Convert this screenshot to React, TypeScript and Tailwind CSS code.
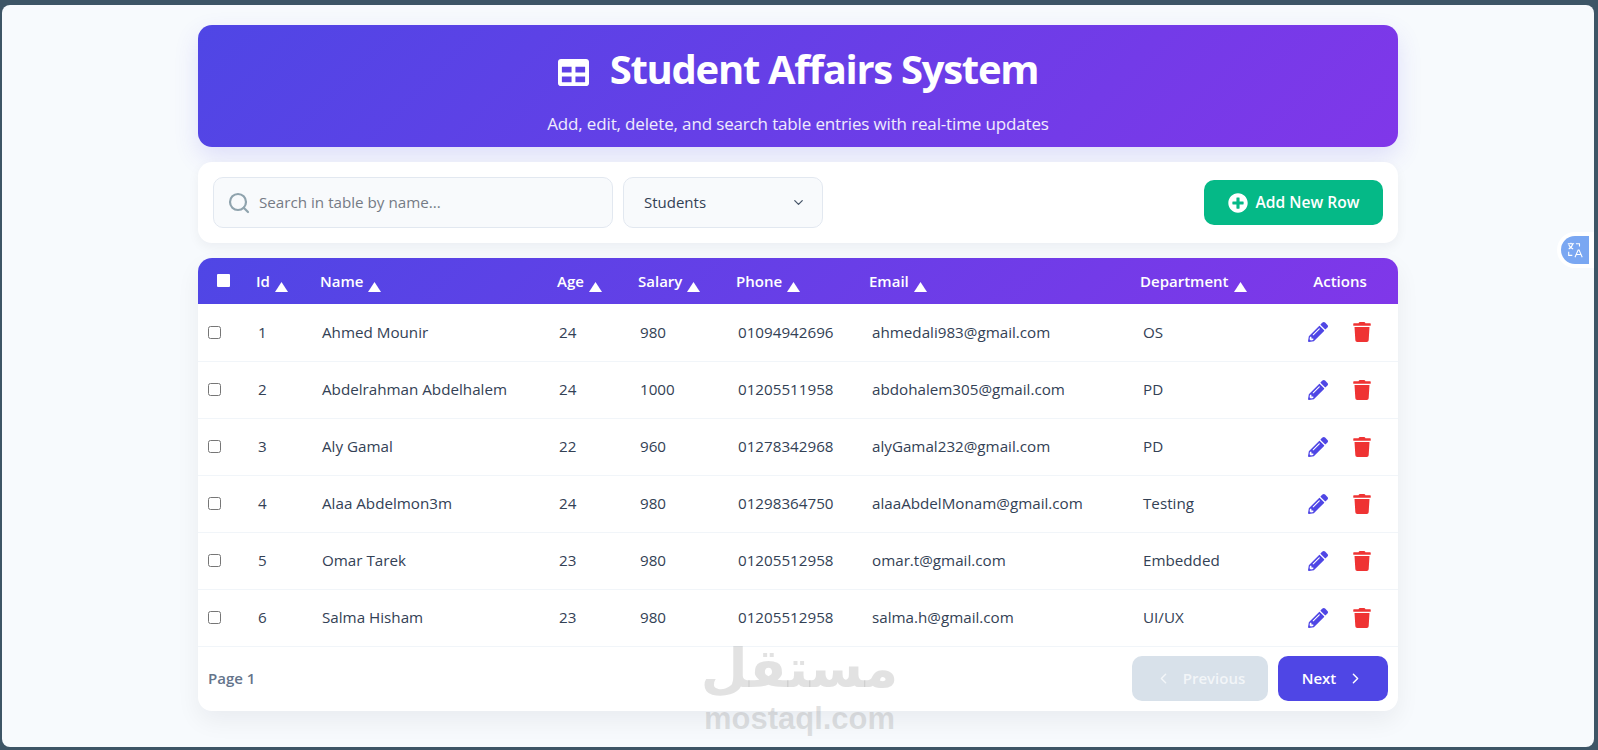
import { ChevronDown, ChevronLeft, ChevronRight, Search } from "lucide-react";
import { FaPencilAlt, FaPlusCircle, FaTable, FaTrash } from "react-icons/fa";

const students = [
  { id: 1, name: "Ahmed Mounir", age: 24, salary: 980, phone: "01094942696", email: "ahmedali983@gmail.com", dept: "OS" },
  { id: 2, name: "Abdelrahman Abdelhalem", age: 24, salary: 1000, phone: "01205511958", email: "abdohalem305@gmail.com", dept: "PD" },
  { id: 3, name: "Aly Gamal", age: 22, salary: 960, phone: "01278342968", email: "alyGamal232@gmail.com", dept: "PD" },
  { id: 4, name: "Alaa Abdelmon3m", age: 24, salary: 980, phone: "01298364750", email: "alaaAbdelMonam@gmail.com", dept: "Testing" },
  { id: 5, name: "Omar Tarek", age: 23, salary: 980, phone: "01205512958", email: "omar.t@gmail.com", dept: "Embedded" },
  { id: 6, name: "Salma Hisham", age: 23, salary: 980, phone: "01205512958", email: "salma.h@gmail.com", dept: "UI/UX" },
];

const columns = [
  { label: "Id", className: "w-[64px] pl-2" },
  { label: "Name", className: "w-[237px] pl-2" },
  { label: "Age", className: "w-[81px] pl-2" },
  { label: "Salary", className: "w-[98px] pl-2" },
  { label: "Phone", className: "w-[134px] pl-2" },
  { label: "Email", className: "w-[271px] pl-[7px]" },
  { label: "Department", className: "w-[149px] pl-[7px]" },
];

function SortArrow() {
  return (
    <svg viewBox="0 0 13 10" className="ml-[5px] inline-block h-[10px] w-[13px] translate-y-[4px] fill-white">
      <polygon points="6.5,0 13,10 0,10" />
    </svg>
  );
}

export default function App() {
  return (
    <div className="h-[750px] w-full overflow-hidden bg-[#3d5566] pb-[3px] pl-[2px] pr-[4px] pt-[5px] font-['Open_Sans',sans-serif]">
      <div className="relative h-full overflow-hidden rounded-lg bg-[#f7fafd] pt-5">
        <div className="mx-auto flex w-[1200px] flex-col gap-[15px]">
          {/* header */}
          <header className="flex h-[122px] flex-col items-center rounded-[14px] bg-[linear-gradient(135deg,#4f46e5,#8037e9)] pt-[15px] text-white shadow-[0_10px_25px_rgba(79,70,229,0.15)]">
            <h1 className="flex items-center gap-[21px] text-[40px] font-bold leading-[58px] tracking-[-1.3px]">
              <FaTable className="mt-[6px] h-[31px] w-[31px]" />
              Student Affairs System
            </h1>
            <p className="mt-[14px] text-[17px] leading-6 tracking-[-0.15px] text-white/90">
              Add, edit, delete, and search table entries with real-time updates
            </p>
          </header>

          {/* toolbar */}
          <div className="flex h-[81px] items-center gap-[10px] rounded-[14px] bg-white px-[15px] shadow-[0_4px_12px_rgba(15,23,42,0.05)]">
            <div className="flex h-[51px] w-[400px] items-center gap-[8px] rounded-[10px] border border-[#e2e8f0] bg-[#f8fafc] px-[13px]">
              <Search className="h-[24px] w-[24px] shrink-0 text-[#8fa3ad]" strokeWidth={2.2} />
              <input
                className="w-full bg-transparent text-[15.2px] text-[#334155] outline-none placeholder:text-[#757b85]"
                placeholder="Search in table by name..."
              />
            </div>
            <div className="relative h-[51px] w-[200px]">
              <select className="h-full w-full appearance-none rounded-[10px] border border-[#e2e8f0] bg-[#f8fafc] pl-5 text-[15px] text-[#334155] outline-none">
                <option>Students</option>
              </select>
              <ChevronDown className="absolute right-[17px] top-[18px] h-[15px] w-[15px] text-[#475569]" />
            </div>
            <button className="ml-auto flex h-[45px] w-[179px] items-center justify-center gap-2 rounded-[10px] bg-[#05b987] text-[15.6px] font-semibold text-white">
              <FaPlusCircle className="h-[20px] w-[20px]" />
              Add New Row
            </button>
          </div>

          {/* table */}
          <div className="overflow-hidden rounded-[14px] bg-white shadow-[0_10px_25px_rgba(15,23,42,0.06)]">
            <div className="bg-[linear-gradient(135deg,#4f46e5,#8037e9)]">
              <table className="w-full table-fixed border-collapse">
                <thead>
                  <tr className="h-[46px] text-[15px] font-semibold text-white">
                    <th className="w-[50px] pl-[19px] text-left align-middle">
                      <span className="mb-[1px] block h-[13px] w-[13px] rounded-[1px] bg-white" />
                    </th>
                    {columns.map((col) => (
                      <th key={col.label} className={`${col.className} text-left font-semibold`}>
                        {col.label}
                        <SortArrow />
                      </th>
                    ))}
                    <th className="text-center font-semibold">Actions</th>
                  </tr>
                </thead>
              </table>
            </div>
            <table className="w-full table-fixed border-collapse">
              <tbody>
                {students.map((s) => (
                  <tr key={s.id} className="h-[57px] border-b border-[#f1f5f9] text-[15.2px] text-[#334155]">
                    <td className="w-[50px] pl-[10px]">
                      <input type="checkbox" className="block h-[13px] w-[13px]" />
                    </td>
                    <td className="w-[64px] pl-[10px]">{s.id}</td>
                    <td className="w-[237px] pl-[10px]">{s.name}</td>
                    <td className="w-[81px] pl-[10px]">{s.age}</td>
                    <td className="w-[98px] pl-[10px]">{s.salary}</td>
                    <td className="w-[134px] pl-[10px]">{s.phone}</td>
                    <td className="w-[271px] pl-[10px]">{s.email}</td>
                    <td className="w-[149px] pl-[10px]">{s.dept}</td>
                    <td>
                      <div className="flex items-center justify-center gap-[25px] pr-[2px]">
                        <FaPencilAlt className="h-[20px] w-[20px] text-[#4f46e5]" />
                        <FaTrash className="h-[20px] w-[18px] text-[#ef3333]" />
                      </div>
                    </td>
                  </tr>
                ))}
              </tbody>
            </table>
            <div className="flex h-[64px] items-center justify-between px-[10px]">
              <span className="text-[15px] font-semibold text-[#64748b]">Page 1</span>
              <div className="flex gap-[10px]">
                <button className="flex h-[45px] w-[136px] items-center justify-center gap-[11px] rounded-[10px] bg-[#d8e1ea] text-[15px] font-semibold text-white/70">
                  <ChevronLeft className="h-[17px] w-[17px]" />
                  Previous
                </button>
                <button className="flex h-[45px] w-[110px] items-center justify-center gap-[11px] rounded-[10px] bg-[#4f46e5] text-[15px] font-semibold text-white">
                  Next
                  <ChevronRight className="h-[17px] w-[17px]" />
                </button>
              </div>
            </div>
          </div>
        </div>

        {/* mostaql watermark */}
        <div className="pointer-events-none absolute left-[700px] top-[631px] flex w-[195px] flex-col items-center text-[#8a8a8a]/25">
          <span dir="rtl" className="font-['DejaVu_Sans',sans-serif] text-[54px] font-bold leading-[66px]">
            مستقل
          </span>
          <span className="font-['Liberation_Sans',sans-serif] text-[31px] font-bold leading-[34px]">mostaql.com</span>
        </div>

        {/* translate widget */}
        <div className="absolute right-0 top-[227px] flex h-[36px] w-[37px] items-center justify-end rounded-l-full bg-white pr-[5px]">
          <div className="flex h-[28px] w-[28px] items-center justify-center rounded-l-full rounded-r-[3px] bg-[#7aa7f2]">
            <svg viewBox="0 0 20 20" className="h-[18px] w-[18px] fill-none stroke-white" strokeWidth="1.2">
              <path d="M2 3h7M5.5 2v1M3 9c2-1 4-3 4.5-6M3 4c.6 2 2.5 4 5 5" />
              <path d="M11 3h4v3M3 12v4h4" />
              <path d="M10 18l3.5-8h1l3.5 8M11.5 15h5" />
            </svg>
          </div>
        </div>
      </div>
    </div>
  );
}
